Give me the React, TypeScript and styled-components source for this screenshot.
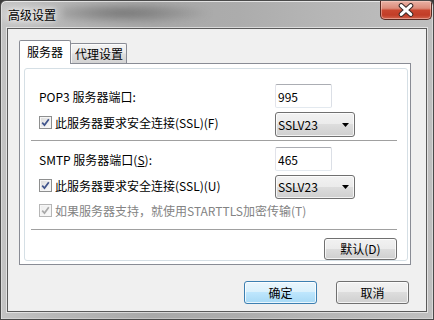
import React from 'react';
import styled, { createGlobalStyle } from 'styled-components';

const FONT = `"Noto Sans CJK SC", "Microsoft YaHei", "Noto Sans", sans-serif`;

const GlobalStyle = createGlobalStyle`
  html, body { margin: 0; padding: 0; background: #3a3a3a; }
  body { font-family: ${FONT}; font-size: 12px; color: #000; }
  * { box-sizing: border-box; }
`;

const Window = styled.div`
  width: 434px;
  height: 320px;
  border: 1px solid #4a4a4a;
  border-radius: 6px 6px 0 0;
  background: linear-gradient(to right, #c4c4c4 0%, #b8b8b8 12%, #a8a8a8 35%, #acacac 55%, #b6b6b6 75%, #bfbfbf 100%);
  box-shadow: inset 0 1px 0 rgba(255, 255, 255, 0.65), inset 1px 0 0 rgba(255, 255, 255, 0.4),
    inset -1px 0 0 rgba(255, 255, 255, 0.4), inset 0 -1px 0 rgba(255, 255, 255, 0.3);
  display: flex;
  flex-direction: column;
  overflow: hidden;
`;

const TitleBar = styled.div`
  height: 27px;
  flex: none;
  display: flex;
  align-items: center;
  padding-left: 7px;
  position: relative;
  &::before {
    content: '';
    position: absolute;
    left: 62px;
    top: 1px;
    width: 150px;
    height: 22px;
    background: radial-gradient(ellipse at 40% 50%, rgba(70, 70, 70, 0.55), rgba(70, 70, 70, 0) 70%);
    filter: blur(3px);
  }
  &::after {
    content: '';
    position: absolute;
    left: 0;
    top: 0;
    width: 60px;
    height: 27px;
    background: radial-gradient(ellipse at 40% 50%, rgba(255, 255, 255, 0.35), rgba(255, 255, 255, 0) 70%);
  }
`;

const TitleText = styled.span`
  position: relative;
  z-index: 1;
  font-size: 12px;
  line-height: 16px;
  margin-top: 1px;
  color: #000;
  text-shadow: 0 0 4px rgba(255, 255, 255, 0.9), 0 0 8px rgba(255, 255, 255, 0.6);
`;

const CloseButton = styled.div`
  position: relative;
  z-index: 1;
  margin-left: auto;
  margin-right: 1px;
  align-self: flex-start;
  margin-top: -1px;
  width: 52px;
  height: 20px;
  border: 1px solid #5a2a22;
  border-top-color: #6a3a32;
  border-radius: 0 0 5px 5px;
  background: linear-gradient(
    to bottom,
    #e9b1a4 0%,
    #dc8c7b 40%,
    #c9462f 52%,
    #c23d27 78%,
    #d0634d 100%
  );
  box-shadow: inset 0 0 0 1px rgba(255, 220, 210, 0.45);
  display: flex;
  align-items: center;
  justify-content: center;
`;

const Client = styled.div`
  flex: 1;
  margin: 0 6px 7px 6px;
  border: 1px solid #5a5a5a;
  background: #f0f0f0;
  box-shadow: 0 0 0 1px rgba(255, 255, 255, 0.55);
  display: flex;
  flex-direction: column;
  padding: 11px 15px 0 11px;
`;

const TabStrip = styled.div`
  display: flex;
  align-items: flex-end;
  height: 23px;
  flex: none;
  position: relative;
  z-index: 1;
`;

const Tab = styled.div<{ $active?: boolean }>`
  border: 1px solid #898c95;
  border-bottom: none;
  border-radius: 2px 2px 0 0;
  white-space: nowrap;
  font-size: 12px;
  line-height: 18px;
  position: relative;
  ${(p) =>
    p.$active
      ? `
    width: 52px;
    height: 24px;
    margin-bottom: -1px;
    padding: 2px 0 0 7px;
    background: #fff;
    z-index: 2;
  `
      : `
    width: 57px;
    height: 20px;
    margin-left: -1px;
    padding: 1px 0 0 4px;
    background: linear-gradient(#f4f4f4 0%, #ececec 45%, #dedede 55%, #d3d3d3 100%);
    box-shadow: inset 1px 1px 0 rgba(255,255,255,0.7);
  `}
`;

const Panel = styled.div`
  height: 202px;
  flex: none;
  border: 1px solid #898c95;
  background: #fff;
  padding: 4px 2px 3px 4px;
  display: flex;
`;

const Group = styled.div`
  flex: 1;
  border: 1px solid #d5dfe5;
  border-radius: 3px;
  box-shadow: inset 0 0 0 1px #fff;
  padding: 15px 10px 0 6px;
  display: flex;
  flex-direction: column;
`;

const Row = styled.div<{ $h: number; $mt?: number; $top?: boolean }>`
  display: flex;
  align-items: ${(p) => (p.$top ? 'flex-start' : 'center')};
  height: ${(p) => p.$h}px;
  margin-top: ${(p) => p.$mt ?? 0}px;
  padding-left: 8px;
  flex: none;
`;

const LabelCol = styled.div<{ $pt?: number }>`
  width: 236px;
  flex: none;
  white-space: nowrap;
  padding-top: ${(p) => p.$pt ?? 0}px;
  line-height: 17px;
`;

const TextBox = styled.input`
  width: 57px;
  height: 24px;
  border: 1px solid;
  border-color: #abadb3 #dbdfe6 #e3e9ef #e2e3ea;
  border-radius: 2px;
  padding: 0 0 0 2px;
  font-family: ${FONT};
  font-size: 12px;
  color: #000;
  background: #fff;
  outline: none;
`;

const Combo = styled.div<{ $h?: number }>`
  width: 80px;
  height: ${(p) => p.$h ?? 25}px;
  border: 1px solid #707070;
  border-radius: 3px;
  background: linear-gradient(#f2f2f2 0%, #ebebeb 50%, #dddddd 50%, #cfcfcf 100%);
  box-shadow: inset 0 0 0 1px rgba(255, 255, 255, 0.75);
  display: flex;
  align-items: center;
  padding: 0 5px 0 2px;
  font-size: 12px;
  line-height: 16px;
  justify-content: space-between;
`;

const CheckLabel = styled.label<{ $disabled?: boolean }>`
  display: inline-flex;
  align-items: center;
  gap: 3px;
  height: 17px;
  line-height: 17px;
  white-space: nowrap;
  color: ${(p) => (p.$disabled ? '#838383' : '#000')};
`;

const Box = styled.span<{ $disabled?: boolean }>`
  width: 13px;
  height: 13px;
  flex: none;
  border: 1px solid ${(p) => (p.$disabled ? '#b6b6b6' : '#8e8f8f')};
  background: ${(p) =>
    p.$disabled
      ? 'linear-gradient(135deg, #ececec, #fbfbfb)'
      : 'linear-gradient(135deg, #d9d9d9 0%, #efefef 60%, #fdfdfd 100%)'};
  box-shadow: inset 0 0 0 1px #f6f6f6;
  display: flex;
  align-items: center;
  justify-content: center;
`;

const Separator = styled.div<{ $mt: number }>`
  height: 1px;
  flex: none;
  background: #a0a0a0;
  margin-top: ${(p) => p.$mt}px;
`;

const ButtonRow = styled.div<{ $mt: number }>`
  display: flex;
  justify-content: flex-end;
  margin-top: ${(p) => p.$mt}px;
  flex: none;
`;

const Footer = styled.div`
  display: flex;
  justify-content: flex-end;
  gap: 19px;
  margin-top: 16px;
  padding-right: 2px;
`;

const PushButton = styled.div<{ $default?: boolean; $h?: number }>`
  width: 73px;
  height: ${(p) => p.$h ?? 23}px;
  border: 1px solid ${(p) => (p.$default ? '#3c7fb1' : '#707070')};
  border-radius: 3px;
  background: ${(p) =>
    p.$default
      ? 'linear-gradient(#eaf6fd 0%, #d9f0fc 50%, #bee6fd 50%, #a7d9f5 100%)'
      : 'linear-gradient(#f2f2f2 0%, #ebebeb 50%, #dddddd 50%, #cfcfcf 100%)'};
  box-shadow: inset 0 0 0 1px rgba(255, 255, 255, 0.75);
  display: flex;
  align-items: center;
  justify-content: center;
  font-size: 12px;
  line-height: 16px;
  white-space: nowrap;
`;

const Check: React.FC<{ disabled?: boolean; children: React.ReactNode }> = ({ disabled, children }) => (
  <CheckLabel $disabled={disabled}>
    <Box $disabled={disabled}>
      <svg width="9" height="9" viewBox="0 0 9 9">
        <path
          d="M1.2 4.6 L3.5 7.1 L7.8 1.3"
          fill="none"
          stroke={disabled ? '#a9a9a9' : '#41558c'}
          strokeWidth="1.7"
        />
      </svg>
    </Box>
    <span>{children}</span>
  </CheckLabel>
);

const Arrow = () => (
  <svg width="7" height="4" viewBox="0 0 7 4">
    <polygon points="0,0 7,0 3.5,4" fill="#000" />
  </svg>
);

export default function App() {
  return (
    <>
      <GlobalStyle />
      <Window>
        <TitleBar>
          <TitleText>高级设置</TitleText>
          <CloseButton>
            <svg width="16" height="14" viewBox="0 0 16 14">
              <path d="M3.2 2.6 L12.8 11.4 M12.8 2.6 L3.2 11.4" stroke="#3a2a28" strokeWidth="5" strokeLinecap="round" />
              <path d="M3.2 2.6 L12.8 11.4 M12.8 2.6 L3.2 11.4" stroke="#fff" strokeWidth="3" strokeLinecap="round" />
            </svg>
          </CloseButton>
        </TitleBar>
        <Client>
          <TabStrip>
            <Tab $active>服务器</Tab>
            <Tab>代理设置</Tab>
          </TabStrip>
          <Panel>
            <Group>
              <Row $h={24}>
                <LabelCol>POP3 服务器端口:</LabelCol>
                <TextBox defaultValue="995" readOnly />
              </Row>
              <Row $h={25} $mt={4} $top>
                <LabelCol $pt={1}>
                  <Check>此服务器要求安全连接(SSL)(F)</Check>
                </LabelCol>
                <Combo>
                  <span>SSLV23</span>
                  <Arrow />
                </Combo>
              </Row>
              <Separator $mt={3} />
              <Row $h={24} $mt={6}>
                <LabelCol>
                  SMTP 服务器端口(<u>S</u>):
                </LabelCol>
                <TextBox defaultValue="465" readOnly />
              </Row>
              <Row $h={24} $mt={4} $top>
                <LabelCol $pt={1}>
                  <Check>此服务器要求安全连接(SSL)(U)</Check>
                </LabelCol>
                <Combo $h={24}>
                  <span>SSLV23</span>
                  <Arrow />
                </Combo>
              </Row>
              <Row $h={17} $mt={3} $top>
                <Check disabled>如果服务器支持，就使用STARTTLS加密传输(T)</Check>
              </Row>
              <Separator $mt={10} />
              <ButtonRow $mt={8}>
                <PushButton $h={22}>默认(D)</PushButton>
              </ButtonRow>
            </Group>
          </Panel>
          <Footer>
            <PushButton $default>确定</PushButton>
            <PushButton>取消</PushButton>
          </Footer>
        </Client>
      </Window>
    </>
  );
}
